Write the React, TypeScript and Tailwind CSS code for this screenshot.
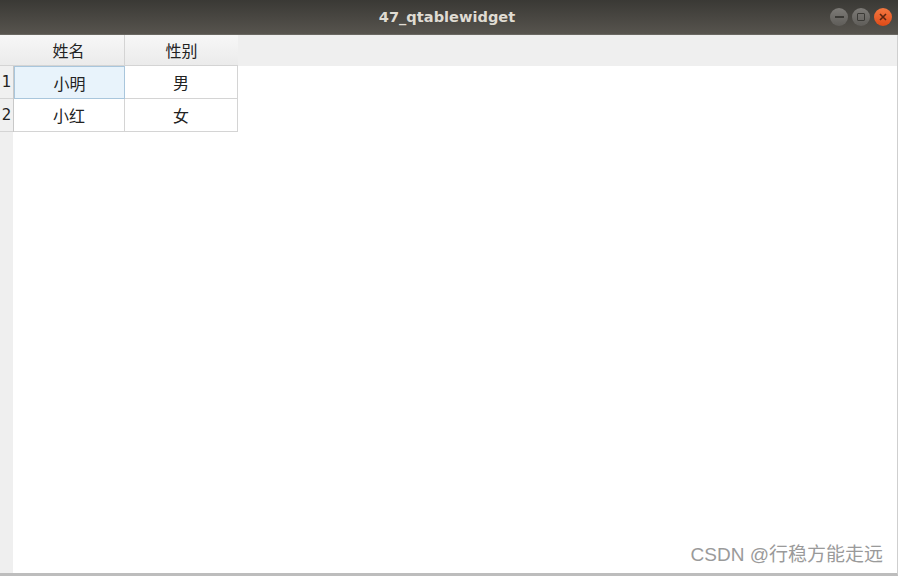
import React from "react";

const cjk = { fontFamily: '"Noto Sans CJK SC", "Noto Sans", sans-serif' };

export default function App() {
  return (
    <div className="w-[898px] h-[576px] flex flex-col overflow-hidden bg-white" style={cjk}>
      {/* title bar */}
      <div className="h-[35px] shrink-0 flex items-center relative bg-gradient-to-b from-[#3a3935] to-[#57544e] border-b border-[#6a6862]">
        <div className="flex-1 text-center text-[14.6px] font-bold text-[#dfdbd2] pr-[4px]" style={{ fontFamily: '"DejaVu Sans", sans-serif' }}>
          47_qtablewidget
        </div>
        <div className="absolute right-[6px] top-[8px] flex gap-[4px]">
          <div className="w-[18px] h-[18px] rounded-full bg-gradient-to-b from-[#7d7b77] to-[#5f5d59] flex items-center justify-center">
            <div className="w-[9px] h-[1.5px] bg-[#3b3a36]" />
          </div>
          <div className="w-[18px] h-[18px] rounded-full bg-gradient-to-b from-[#7d7b77] to-[#5f5d59] flex items-center justify-center">
            <div className="w-[8px] h-[8px] border-[1.5px] border-[#3b3a36] rounded-[1px]" />
          </div>
          <div className="w-[18px] h-[18px] rounded-full bg-gradient-to-b from-[#f4773f] to-[#df4a16] flex items-center justify-center">
            <svg width="8" height="8" viewBox="0 0 8 8">
              <path d="M1 1L7 7M7 1L1 7" stroke="#5a2510" strokeWidth="1.6" />
            </svg>
          </div>
        </div>
      </div>
      {/* content */}
      <div className="flex-1 flex flex-col relative border-b-[3px] border-[#bdbdbd] border-r border-r-[#cfcfcf]">
        {/* header row */}
        <div className="h-[31px] shrink-0 flex bg-[#efefef]">
          <div className="w-[13px] bg-gradient-to-b from-[#f7f7f7] to-[#ebebeb] border-b border-[#d4d4d4]" />
          <div className="w-[112px] flex items-center justify-center text-[16px] text-[#222] bg-gradient-to-b from-[#f7f7f7] to-[#ebebeb] border-r border-b border-[#d4d4d4]">姓名</div>
          <div className="w-[113px] flex items-center justify-center text-[16px] text-[#222] bg-gradient-to-b from-[#f7f7f7] to-[#ebebeb] border-b border-[#d4d4d4]">性别</div>
          <div className="flex-1" />
        </div>
        <div className="flex-1 flex">
          <div className="w-[13px] bg-[#efefef] flex flex-col">
            <div className="h-[33px] flex items-center justify-center text-[15px] text-[#222] border-b border-[#d4d4d4] bg-[#f0f0f0]" style={{ fontFamily: '"DejaVu Sans", sans-serif' }}>1</div>
            <div className="h-[33px] flex items-center justify-center text-[15px] text-[#222] border-b border-[#d4d4d4] bg-[#f0f0f0]" style={{ fontFamily: '"DejaVu Sans", sans-serif' }}>2</div>
          </div>
          <div className="flex flex-col border-l border-[#c8c8c8] self-start">
            <div className="flex h-[33px]">
              <div className="w-[111px] flex items-center justify-center text-[16px] text-[#222] bg-[#e8f3fb] border border-[#a9c6dc]">小明</div>
              <div className="w-[113px] flex items-center justify-center text-[16px] text-[#222] border-r border-b border-[#d4d4d4]">男</div>
            </div>
            <div className="flex h-[33px]">
              <div className="w-[111px] flex items-center justify-center text-[16px] text-[#222] border-r border-b border-[#d4d4d4]">小红</div>
              <div className="w-[113px] flex items-center justify-center text-[16px] text-[#222] border-r border-b border-[#d4d4d4]">女</div>
            </div>
          </div>
          <div className="flex-1" />
        </div>
        <div className="absolute right-[14px] bottom-[4px] text-[19px] text-[#9a9a9a]" style={{ fontFamily: '"Liberation Sans", "Noto Sans CJK SC", sans-serif' }}>
          CSDN @行稳方能走远
        </div>
      </div>
    </div>
  );
}
